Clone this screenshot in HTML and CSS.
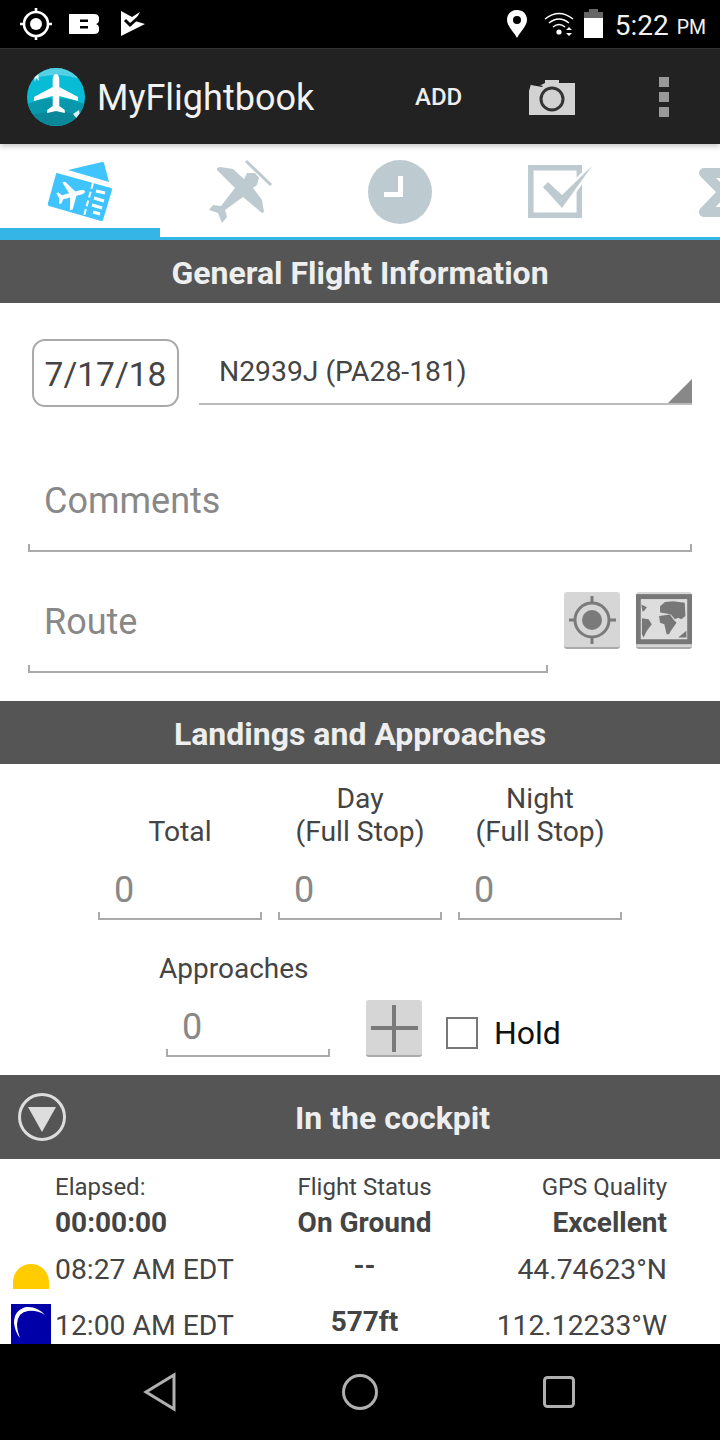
FILE: index.html
```html
<!DOCTYPE html>
<html>
<head>
    <title>MyFlightbook</title>
    <meta http-equiv="Content-Type" content="text/html; charset=utf-8"/>
    <link rel="stylesheet" href="styles.css">
</head>
<body>
<div class="app">

    <div class="statusBar">
        <svg class="statusIcons" width="150" height="48" viewBox="0 0 150 48">
            <g fill="none" stroke="#fff">
                <circle cx="36" cy="24" r="12" stroke-width="2.6"/>
                <path d="M36 8v5M36 35v5M20 24h5M47 24h5" stroke-width="2.6"/>
            </g>
            <circle cx="36" cy="24" r="6" fill="#fff"/>
            <path fill="#fff" fill-rule="evenodd" d="M69 14h25q5 0 5 4v2q0 3-3 4 3 1 3 4v2q0 4-5 4H69zM80 19.500v2.500h8v-2.500zM80 26v2.500h8v-2.500z"/>
            <path fill="#fff" d="M121 11l11 6 8-5-5 9 10 3-24 12z"/>
            <path fill="none" stroke="#000" stroke-width="3" d="M125 20l5 5 9-8"/>
        </svg>
        <div class="statusRight">
            <svg width="22" height="30" viewBox="0 0 22 30"><path fill="#fff" fill-rule="evenodd" d="M11 1C5 1 1 5 1 11c0 6 7 12 10 18 3-6 10-12 10-18C21 5 17 1 11 1zM11 7a4 4 0 1 1 0 8 4 4 0 0 1 0-8z"/></svg>
            <svg class="wifi" width="30" height="24" viewBox="0 0 30 24">
                <g fill="none" stroke="#fff" stroke-width="1.5">
                    <path d="M1 7q14-11 28 0"/>
                    <path d="M5 11q10-8 20 0"/>
                    <path d="M9 15q6-5 12 0"/>
                </g>
                <circle cx="15" cy="20" r="2.600" fill="#fff"/>
                <path fill="#fff" d="M25 15l3 3h-6zM25 24l-3-3h6z"/>
            </svg>
            <svg class="battery" width="19" height="30" viewBox="0 0 19 30">
                <path fill="#666" d="M5 0h9v3h5v6H0V3h5z"/>
                <rect y="9" width="19" height="20" fill="#fff"/>
            </svg>
            <span class="clock">5:22</span><span class="ampm">PM</span>
        </div>
    </div>

    <div class="actionBar">
        <svg class="logo" width="58" height="58" viewBox="27 67 58 58">
            <defs><clipPath id="logoClip"><circle cx="56" cy="96" r="29"/></clipPath></defs>
            <g clip-path="url(#logoClip)">
                <rect x="27" y="67" width="58" height="58" fill="#09bcd6"/>
                <path fill="#55cfe2" d="M27 67h58v13q-29-12-58 0z"/>
                <path fill="#0897ab" d="M27 103q29-12 58 0v22H27z"/>
                <path fill="#0a8798" d="M27 116q29-11 58 0v9H27z"/>
                <path fill="#fff" d="M33 71l5-1 1 10-3-3-1 4zM73 113l6-4 1 6-2 4z" opacity=".85"/>
                <path fill="#fff" transform="translate(56 93) scale(1.1 1)" d="M0-20C2-20 3-17 3-14V-7L20 3V7L3 2V12L8 16V19L0 17-8 19V16L-3 12V2L-20 7V3L-3-7V-14C-3-17-2-20 0-20Z"/>
            </g>
        </svg>
        <span class="appTitle">MyFlightbook</span>
        <span class="addBtn">ADD</span>
        <svg class="camera" width="46" height="36" viewBox="0 0 46 36">
            <path fill="#d2d2d2" d="M0 12L2 5 10 7 16 4V1H30V4H46V36H0z"/>
            <circle cx="23" cy="20" r="11" fill="none" stroke="#333" stroke-width="3"/>
            <path fill="#222" d="M2 4l12 3-1 1-11-2z"/>
        </svg>
        <div class="overflow"><i></i><i></i><i></i></div>
    </div>

    <div class="tabs">
        <div class="tab selected">
            <svg width="80" height="76" viewBox="40 152 80 76">
                <path fill="#40c4ff" d="M68 170l34-8q2 0 2 1l5 19zM57 173l54 15q1 0 1 2l-9 30q0 1-2 1l-52-15q-2-1-1-3l8-29q0-1 1-1z"/>
                <path stroke="#fff" stroke-width="2" stroke-dasharray="6 3" d="M93 183l-9 33"/>
                <path stroke="#fff" stroke-width="3" d="M96 191l9 2M94 198l10 3M92 205l10 3M93 212l7 2"/>
                <path fill="#fff" transform="translate(71 195) rotate(75) scale(.72)" d="M0-20C2-20 3-17 3-14V-7L20 3V7L3 2V12L8 16V19L0 17-8 19V16L-3 12V2L-20 7V3L-3-7V-14C-3-17-2-20 0-20Z"/>
            </svg>
        </div>
        <div class="tab">
            <svg width="80" height="76" viewBox="200 152 80 76">
                <path fill="#bdcbd1" d="M217 168l3-1 13 2 11 10 3-6h8l4 5-2 7-4 3 9 12 2 12-2 1-19-16-18 13 2 7-5 6-4-10-9-3 4-5 8 1 14-18-18-18z"/>
                <path stroke="#bdcbd1" stroke-width="3" d="M246 161l25 24"/>
            </svg>
        </div>
        <div class="tab">
            <svg width="80" height="76" viewBox="360 152 80 76">
                <circle cx="400" cy="192" r="32" fill="#bdcbd1"/>
                <path fill="#fff" d="M398 176h5v21h-19v-5h14z"/>
            </svg>
        </div>
        <div class="tab">
            <svg width="80" height="76" viewBox="520 152 80 76">
                <path fill="none" stroke="#bdcbd1" stroke-width="5.500" d="M530.800 167.800h48.500v47.500h-48.500z"/>
                <path fill="#bdcbd1" stroke="#fff" stroke-width="5" paint-order="stroke" d="M543 187l5-5 14 13 30-29-30 42z"/>
            </svg>
        </div>
        <div class="tab">
            <svg width="80" height="76" viewBox="680 152 80 76">
                <path fill="none" stroke="#bdcbd1" stroke-width="10" stroke-linejoin="round" d="M741 173h-37l19 19-19 20h37"/>
            </svg>
        </div>
    </div>

    <div class="content">
        <div class="sectionHeader">General Flight Information</div>
        <div class="generalInfo">
            <div class="dateRow">
                <div class="dateBtn">7/17/18</div>
                <div class="spinner">N2939J (PA28-181)</div>
            </div>
            <div class="field comments">Comments</div>
            <div class="routeRow">
                <div class="field route">Route</div>
                <div class="imgBtn">
                    <svg width="56" height="56" viewBox="0 0 56 56">
                        <g fill="none" stroke="#7a7a7a" stroke-width="3">
                            <circle cx="28" cy="28" r="17"/>
                            <path d="M28 4v8M28 44v8M5 28h6M45 28h7"/>
                        </g>
                        <circle cx="28" cy="28" r="10" fill="#7a7a7a"/>
                    </svg>
                </div>
                <div class="imgBtn">
                    <svg width="56" height="56" viewBox="0 0 170 170">
                        <rect x="7" y="14" width="156" height="137" fill="#ddd" stroke="#777" stroke-width="15"/>
                        <path fill="#777" d="M16 38l17 8-7 10-6 4zM18 80l20 3 10 15-15 20-10 20-5-10v-25zM73 43l15-13 25-2 35 5 2 40-12 10-10-5-10 5-12-15-10-2-23-4zM70 73l33-5 10 15 10 10-17 25-6 10h-7l-7-30-13-5zM153 118v20h-25z"/>
                    </svg>
                </div>
            </div>
        </div>

        <div class="sectionHeader">Landings and Approaches</div>
        <div class="landings">
            <div class="countGrid">
                <div class="countCol">
                    <div class="countLabel">Total</div>
                    <div class="field count">0</div>
                </div>
                <div class="countCol">
                    <div class="countLabel">Day<br>(Full Stop)</div>
                    <div class="field count">0</div>
                </div>
                <div class="countCol">
                    <div class="countLabel">Night<br>(Full Stop)</div>
                    <div class="field count">0</div>
                </div>
            </div>
            <div class="approachRow">
                <div class="approachCol">
                    <div class="approachLabel">Approaches</div>
                    <div class="field count">0</div>
                </div>
                <div class="imgBtn plusBtn">
                    <svg width="56" height="56" viewBox="0 0 56 56">
                        <path stroke="#7a7a7a" stroke-width="4" d="M28 5v47M5 28h47"/>
                    </svg>
                </div>
                <div class="checkBox"></div>
                <span class="holdLabel">Hold</span>
            </div>
        </div>

        <div class="sectionHeader cockpitHeader">
            <svg width="48" height="48" viewBox="0 0 48 48">
                <circle cx="24" cy="24" r="22.500" fill="none" stroke="#ddd" stroke-width="3"/>
                <path fill="#ddd" d="M10 14h28L24 39z"/>
            </svg>
            <span class="cockpitTitle">In the cockpit</span>
        </div>
        <div class="cockpit">
            <div></div><div class="small">Elapsed:</div><div class="small mid">Flight Status</div><div class="small end">GPS Quality</div>
            <div></div><div class="strong">00:00:00</div><div class="strong mid">On Ground</div><div class="strong end">Excellent</div>
            <div class="sun"></div><div class="cell">08:27 AM EDT</div><div class="strong mid up">--</div><div class="cell end">44.74623°N</div>
            <svg class="moon" width="40" height="40" viewBox="0 0 40 40">
                <rect width="40" height="40" fill="#0000a8"/>
                <path fill="#fff" d="M34 11Q26 2 15 3 3 6 3 19q1 9 6 15-3-8-3-14 1-12 11-13 9-1 17 4z"/>
            </svg>
            <div class="cell">12:00 AM EDT</div><div class="strong mid up">577ft</div><div class="cell end">112.12233°W</div>
        </div>
    </div>

    <div class="navBar">
        <svg width="34" height="40" viewBox="0 0 34 40"><path fill="none" stroke="#b0b0b0" stroke-width="3" d="M31 3v34L3 20z"/></svg>
        <svg width="36" height="36" viewBox="0 0 36 36"><circle cx="18" cy="18" r="16.500" fill="none" stroke="#b0b0b0" stroke-width="3"/></svg>
        <svg width="32" height="32" viewBox="0 0 32 32"><rect x="1.500" y="1.500" width="29" height="29" rx="3" fill="none" stroke="#b0b0b0" stroke-width="3"/></svg>
    </div>

</div>
</body>
</html>
```

FILE: styles.css
```css
html, body {
    margin: 0;
    padding: 0;
}

body {
    font-family: Roboto, "Liberation Sans", sans-serif;
    background-color: white;
}

svg {
    display: block;
}

.app {
    width: 720px;
    height: 1440px;
    display: flex;
    flex-direction: column;
    overflow: hidden;
}

/**** STATUS BAR ****/

.statusBar {
    height: 48px;
    flex: none;
    background-color: black;
    display: flex;
    justify-content: space-between;
    align-items: center;
}

.statusRight {
    display: flex;
    align-items: center;
    padding-right: 14px;
    color: #f2f2f2;
}

.wifi {
    margin-left: 16px;
}

.battery {
    margin-left: 10px;
}

.clock {
    font-size: 28px;
    margin-left: 12px;
    margin-top: 2px;
}

.ampm {
    font-size: 19.500px;
    margin-left: 8px;
    margin-top: 6px;
}

/**** ACTION BAR ****/

.actionBar {
    height: 96px;
    flex: none;
    box-sizing: border-box;
    background-color: #222;
    border-top: 1px solid #333;
    display: flex;
    align-items: center;
    padding-left: 27px;
    position: relative;
    z-index: 1;
    box-shadow: 0 2px 6px rgba(0, 0, 0, 0.25);
}

.appTitle {
    font-size: 36px;
    color: #f2f2f2;
    margin-left: 12px;
    margin-top: 2px;
    width: 318px;
}

.addBtn {
    font-size: 24px;
    font-weight: 500;
    color: #eee;
    width: 114px;
}

.camera {
    width: 46px;
}

.overflow {
    margin-left: 84px;
    display: flex;
    flex-direction: column;
    gap: 5px;
}

.overflow i {
    display: block;
    width: 10px;
    height: 10px;
    background-color: #999;
}

/**** TABS ****/

.tabs {
    height: 96px;
    flex: none;
    box-sizing: border-box;
    display: flex;
    overflow: hidden;
    border-bottom: 3px solid #35b5e5;
}

.tab {
    width: 160px;
    flex: none;
    box-sizing: border-box;
    padding-top: 8px;
    display: flex;
    justify-content: center;
}

.tab.selected {
    height: 93px;
    border-bottom: 9px solid #35b5e5;
}

/**** CONTENT ****/

.content {
    flex: 1;
    overflow: hidden;
    color: #444;
}

.sectionHeader {
    height: 63px;
    line-height: 67px;
    background-color: #555;
    color: #eee;
    font-size: 32px;
    font-weight: 700;
    text-align: center;
}

/* underline with the small ticks at both ends */
.field {
    box-sizing: border-box;
    border-bottom: 2px solid #aaa;
    background:
        linear-gradient(#aaa, #aaa) left bottom / 2px 6px no-repeat,
        linear-gradient(#aaa, #aaa) right bottom / 2px 6px no-repeat;
    color: #888;
    font-size: 36px;
}

.generalInfo {
    height: 398px;
    box-sizing: border-box;
    padding: 36px 28px 0;
}

.dateRow {
    display: flex;
    align-items: flex-start;
}

.dateBtn {
    width: 147px;
    height: 68px;
    box-sizing: border-box;
    margin-left: 4px;
    border: 2px solid #aaa;
    border-radius: 13px;
    font-size: 33.500px;
    line-height: 68px;
    text-align: center;
    color: #444;
}

.spinner {
    flex: 1;
    height: 66px;
    box-sizing: border-box;
    margin-left: 20px;
    padding: 16px 0 0 20px;
    border-bottom: 2px solid #bbb;
    font-size: 28.300px;
    position: relative;
}

.spinner:after {
    content: "";
    position: absolute;
    right: 0;
    bottom: 0;
    border-style: solid;
    border-width: 0 0 24px 24px;
    border-color: transparent transparent #888 transparent;
}

.comments {
    height: 73px;
    margin-top: 72px;
    padding: 0 0 0 16px;
    line-height: 44px;
}

.routeRow {
    display: flex;
    align-items: flex-start;
    margin-top: 41px;
}

.route {
    width: 520px;
    height: 80px;
    padding-left: 16px;
    line-height: 58px;
}

.imgBtn {
    width: 56px;
    height: 57px;
    margin-left: 16px;
    background-color: #d6d6d6;
    border-bottom: 2px solid #aaa;
    border-radius: 3px;
    box-sizing: border-box;
}

.routeRow .imgBtn {
    margin-top: -1px;
}

.landings {
    height: 311px;
    box-sizing: border-box;
    padding-top: 18px;
    font-size: 28.300px;
}

.countGrid {
    display: grid;
    grid-template-columns: 180px 180px 180px;
    margin-left: 90px;
}

.countCol {
    display: flex;
    flex-direction: column;
    justify-content: flex-end;
    align-items: center;
}

.countLabel {
    line-height: 33px;
    text-align: center;
}

.approachLabel {
    line-height: 33px;
    font-size: 28px;
}

.count {
    width: 164px;
    height: 66px;
    margin-top: 6px;
    padding-left: 16px;
    line-height: 72px;
}

.approachRow {
    display: flex;
    align-items: flex-end;
    margin-top: 32px;
    padding-left: 159px;
}

.approachCol {
    width: 171px;
}

.approachCol .count {
    margin-left: 7px;
}

.plusBtn {
    margin-left: 36px;
}

.checkBox {
    width: 32px;
    height: 32px;
    box-sizing: border-box;
    margin-left: 24px;
    margin-bottom: 8px;
    border: 2px solid #777;
}

.holdLabel {
    margin-left: 16px;
    font-size: 32px;
    color: #111;
    margin-bottom: 5px;
}

.cockpitHeader {
    height: 84px;
    display: flex;
    align-items: center;
    line-height: normal;
    padding-left: 18px;
}

.cockpitTitle {
    margin-left: 229px;
    margin-top: 2px;
}

.cockpit {
    display: grid;
    grid-template-columns: 44px 200px 219px 193px;
    grid-template-rows: 38px 32px 62px 50px;
    padding: 9px 0 0 11px;
    font-size: 28.300px;
    align-items: center;
}

.small {
    font-size: 24px;
}

.strong {
    font-size: 28px;
    font-weight: 700;
}

.mid {
    text-align: center;
}

.end {
    text-align: right;
}

.up {
    margin-top: -8px;
}

.sun {
    width: 36px;
    height: 25px;
    margin: 14px 0 0 2px;
    background-color: #ffcc00;
    border-radius: 18px 18px 0 0;
}

.moon {
    align-self: start;
    margin-top: 4px;
}

/**** NAVIGATION ****/

.navBar {
    height: 96px;
    flex: none;
    box-sizing: border-box;
    background-color: black;
    display: flex;
    align-items: center;
    padding-left: 143px;
    gap: 165px;
}
```
